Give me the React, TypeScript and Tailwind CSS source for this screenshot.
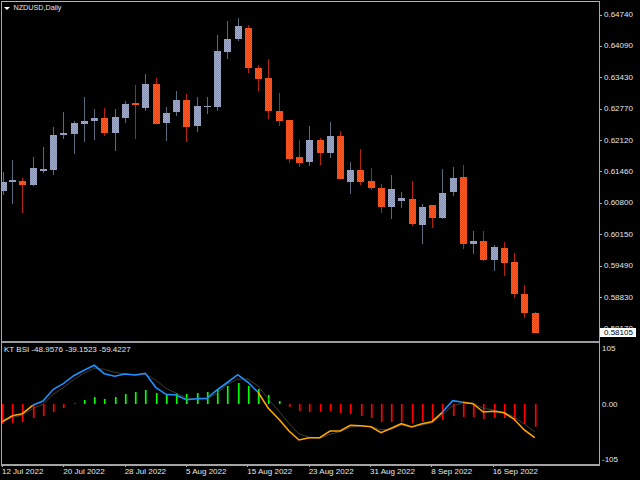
// NZDUSD daily chart with the KT BSI indicator pane below it

// [x, body top, body bottom, wick top, wick bottom]
type Candle = [number, number, number, number, number];

const blueCandles: Candle[] = [
  [3, 182, 191, 172, 195], [12, 180, 182, 160, 204], [33, 168, 185, 157, 186], [43, 169, 171, 147, 173],
  [53, 135, 170, 127, 175], [63, 133, 135, 112, 139], [74, 123, 134, 121, 154], [84, 121, 124, 97, 142],
  [94, 118, 121, 109, 140], [115, 117, 133, 109, 151], [125, 104, 118, 101, 123], [145, 84, 108, 74, 111],
  [166, 113, 123, 107, 141], [176, 100, 112, 91, 116], [197, 106, 126, 97, 132], [207, 106, 107, 97, 114],
  [217, 51, 107, 35, 111], [227, 39, 52, 21, 59], [238, 26, 39, 18, 41], [309, 140, 162, 126, 166],
  [330, 136, 153, 122, 158], [350, 170, 182, 162, 194], [391, 189, 207, 175, 219], [401, 198, 201, 192, 208],
  [422, 207, 225, 204, 244], [442, 193, 218, 169, 219], [453, 178, 192, 167, 196], [473, 241, 244, 231, 254],
  [494, 247, 260, 245, 271],
];

const redCandles: Candle[] = [
  [22, 181, 185, 178, 213], [104, 118, 133, 108, 136], [135, 103, 105, 85, 139], [156, 84, 124, 78, 124],
  [186, 100, 127, 94, 142], [248, 28, 68, 25, 73], [258, 68, 79, 65, 91], [268, 78, 111, 59, 119],
  [279, 111, 121, 93, 126], [289, 120, 159, 120, 163], [299, 157, 163, 140, 167], [320, 140, 153, 138, 165],
  [340, 136, 179, 131, 179], [360, 170, 182, 149, 185], [371, 181, 188, 168, 190], [381, 188, 207, 184, 213],
  [412, 199, 224, 181, 226], [432, 205, 218, 205, 228], [463, 177, 244, 165, 249], [483, 241, 260, 231, 261],
  [504, 248, 263, 242, 276], [514, 262, 294, 253, 298], [524, 294, 313, 285, 318], [535, 313, 333, 312, 333],
];

// [x, value end of the bar]; the zero line sits at y=404
const bars: [number, number][] = [
  [2.3, 424], [12.3, 423], [22.3, 422], [32.7, 418], [43, 416], [53.3, 412], [63.3, 408], [73.7, 403.5],
  [84, 400], [94.3, 397], [104.3, 399], [114.7, 397], [125, 394], [135.3, 392], [145.3, 390], [155.7, 393],
  [166, 394], [176, 393], [186.3, 394], [196.7, 393], [207, 392], [217, 390], [227.3, 386], [237.7, 383],
  [248, 386], [258, 389], [268.3, 395], [278.7, 401], [289, 407], [299, 411], [309.3, 412], [319.7, 412],
  [330, 411], [340, 413], [350.3, 414], [360.7, 416], [371, 418], [381, 422], [391.3, 422], [401.3, 422],
  [411.7, 423], [422, 422], [432, 422], [442.3, 420], [452.7, 416], [462.7, 417], [473, 417], [483.3, 419],
  [493.7, 418], [504, 418], [514, 421], [524.3, 424], [534.7, 426.7],
];

const orangeA = "2.3,421.7 12.3,415.7 22.3,413.7 32.7,405.3";
const blueA =
  "32.7,405.3 43,401 53.3,389.3 63.3,383.7 73.7,375.7 84,370.3 94.3,365.3 104.3,373.7 114.7,376.3 125,374 135.3,375 145.3,373.3 155.7,387.3 166,394.3 176,395 186.3,399.7 196.7,398.7 207,398.3 217,390 227.3,382.5 237.7,374.7 248,382.3 258,392.3";
const orangeB =
  "258,392.3 268.3,408.3 278.7,419 289,431 299,440 309.3,437.7 319.7,437.7 330,431 340,431 350.3,425.3 360.7,425.7 371,426.7 381,432.7 391.3,428.3 401.3,423.7 411.7,427 422,423.7 432,421.7 442.3,412.3";
const blueB = "442.3,412.3 452.7,400.7 462.7,402.3";
const orangeC =
  "462.7,402.3 473,403.7 483.3,412 493.7,411.3 504,412.7 514,419 524.3,430 534.7,437.7";
const signal =
  "2.3,420 12.3,417.7 22.3,415 32.7,408.7 43,404.3 53.3,394.3 63.3,387.7 73.7,379.7 84,373.3 94.3,368.3 104.3,369.3 114.7,372.3 125,374 135.3,375 145.3,374.3 155.7,380 166,388.3 176,393.3 186.3,397.7 196.7,399 207,399 217,393.3 227.3,384.3 237.7,379.3 248,379 258,386 268.3,399 278.7,411 289,423.3 299,434 309.3,437.3 319.7,438.3 330,434.3 340,431.7 350.3,427.3 360.7,426 371,426.7 381,429.7 391.3,429.3 401.3,425 411.7,426.7 422,425 432,422.7 442.3,415 452.7,405.7 462.7,403.3 473,403 483.3,408.3 493.7,410 504,412.3 514,416.7 524.3,424 534.7,431.7";

const prices = ["0.64740", "0.64090", "0.63430", "0.62770", "0.62120", "0.61460", "0.60800", "0.60150", "0.59490", "0.58830", "0.58170"];
const dates = ["12 Jul 2022", "20 Jul 2022", "28 Jul 2022", "5 Aug 2022", "15 Aug 2022", "23 Aug 2022", "31 Aug 2022", "8 Sep 2022", "16 Sep 2022"];

function Candles({ data, fill, wick }: { data: Candle[]; fill: string; wick: string }) {
  return (
    <>
      {data.map(([x, top, bottom, high, low]) => (
        <g key={x}>
          <rect x={x} y={high} width={1} height={low - high} fill={wick} />
          <rect x={x - 3} y={top} width={7} height={Math.max(bottom - top, 1)} fill={fill} />
        </g>
      ))}
    </>
  );
}

export default function App() {
  return (
    <div className="w-[640px] h-[480px] bg-black overflow-hidden pt-px pl-px font-['Liberation_Sans',sans-serif] text-[8px] text-[#e6e6e6]">
      <div className="flex">
        <div className="w-[599px] border-x border-[#a8a8a8]">
          <div className="relative h-[340px] border-t border-[#b4b4b4]">
            <div className="absolute left-[2px] top-[1px] flex items-center gap-[3.5px] leading-[10px]">
              <span className="w-0 h-0 border-x-[3px] border-x-transparent border-t-[3px] border-t-white" />
              <span className="text-[7.2px]">NZDUSD,Daily</span>
            </div>
            <svg width={597} height={339} viewBox="2 2 597 339" shapeRendering="crispEdges" className="block">
              <defs>
                <pattern id="redBody" width="2" height="2" patternUnits="userSpaceOnUse">
                  <rect width="2" height="2" fill="#ff3a0c" />
                  <rect width="1" height="1" fill="#ff5c2a" />
                  <rect x="1" y="1" width="1" height="1" fill="#ff5c2a" />
                </pattern>
                <pattern id="blueBody" width="2" height="2" patternUnits="userSpaceOnUse">
                  <rect width="2" height="2" fill="#8090ba" />
                  <rect width="1" height="1" fill="#a4afd0" />
                  <rect x="1" y="1" width="1" height="1" fill="#a4afd0" />
                </pattern>
              </defs>
              <Candles data={blueCandles} fill="url(#blueBody)" wick="#566a7c" />
              <Candles data={redCandles} fill="url(#redBody)" wick="#b42408" />
            </svg>
          </div>
          <div className="border-y-2 border-t-[#9c9ca0] border-b-[#a4a4a4]">
            <div className="relative h-[121px]">
              <div className="absolute left-[2px] top-[2px] leading-[10px]">KT BSI -48.9576 -39.1523 -59.4227</div>
              <svg width={597} height={121} viewBox="2 343 597 121" className="block">
                {bars.map(([x, end]) => (
                  <rect
                    key={x}
                    x={Math.round(x) - 0.1}
                    y={Math.min(end, 404)}
                    width={1.7}
                    height={Math.abs(end - 404)}
                    fill={end < 404 ? "#00ff00" : "#ff0000"}
                  />
                ))}
                <polyline points={signal} fill="none" stroke="#4d4d42" strokeWidth={0.8} />
                <polyline points={orangeA} fill="none" stroke="#ffa500" strokeWidth={1.6} />
                <polyline points={blueA} fill="none" stroke="#1e90ff" strokeWidth={1.6} />
                <polyline points={orangeB} fill="none" stroke="#ffa500" strokeWidth={1.6} />
                <polyline points={blueB} fill="none" stroke="#1e90ff" strokeWidth={1.6} />
                <polyline points={orangeC} fill="none" stroke="#ffa500" strokeWidth={1.6} />
              </svg>
            </div>
          </div>
        </div>

        <div className="relative flex-1">
          <div className="h-[342px] flex flex-col gap-[9.4px] pt-[3px]">
            {prices.map((p) => (
              <div key={p} className="h-[22px] shrink-0 flex items-center gap-[2px]">
                <span className="w-[2px] h-px bg-[#b4b4b4]" />
                <span>{p}</span>
              </div>
            ))}
          </div>
          <div className="absolute left-0 top-[327px] w-[36px] h-[9px] bg-white text-black pl-[4px] leading-[9px]">0.58105</div>
          <div className="h-[122px] flex flex-col justify-between pl-[2px] leading-[11px]">
            <span>105</span>
            <span>0.00</span>
            <span>-105</span>
          </div>
        </div>
      </div>

      <div className="flex pl-px">
        {dates.map((d) => (
          <div key={d} className="w-[61.33px] shrink-0">
            <div className="w-px h-px bg-[#b4b4b4]" />
            <div className="leading-[10px]">{d}</div>
          </div>
        ))}
      </div>
    </div>
  );
}
